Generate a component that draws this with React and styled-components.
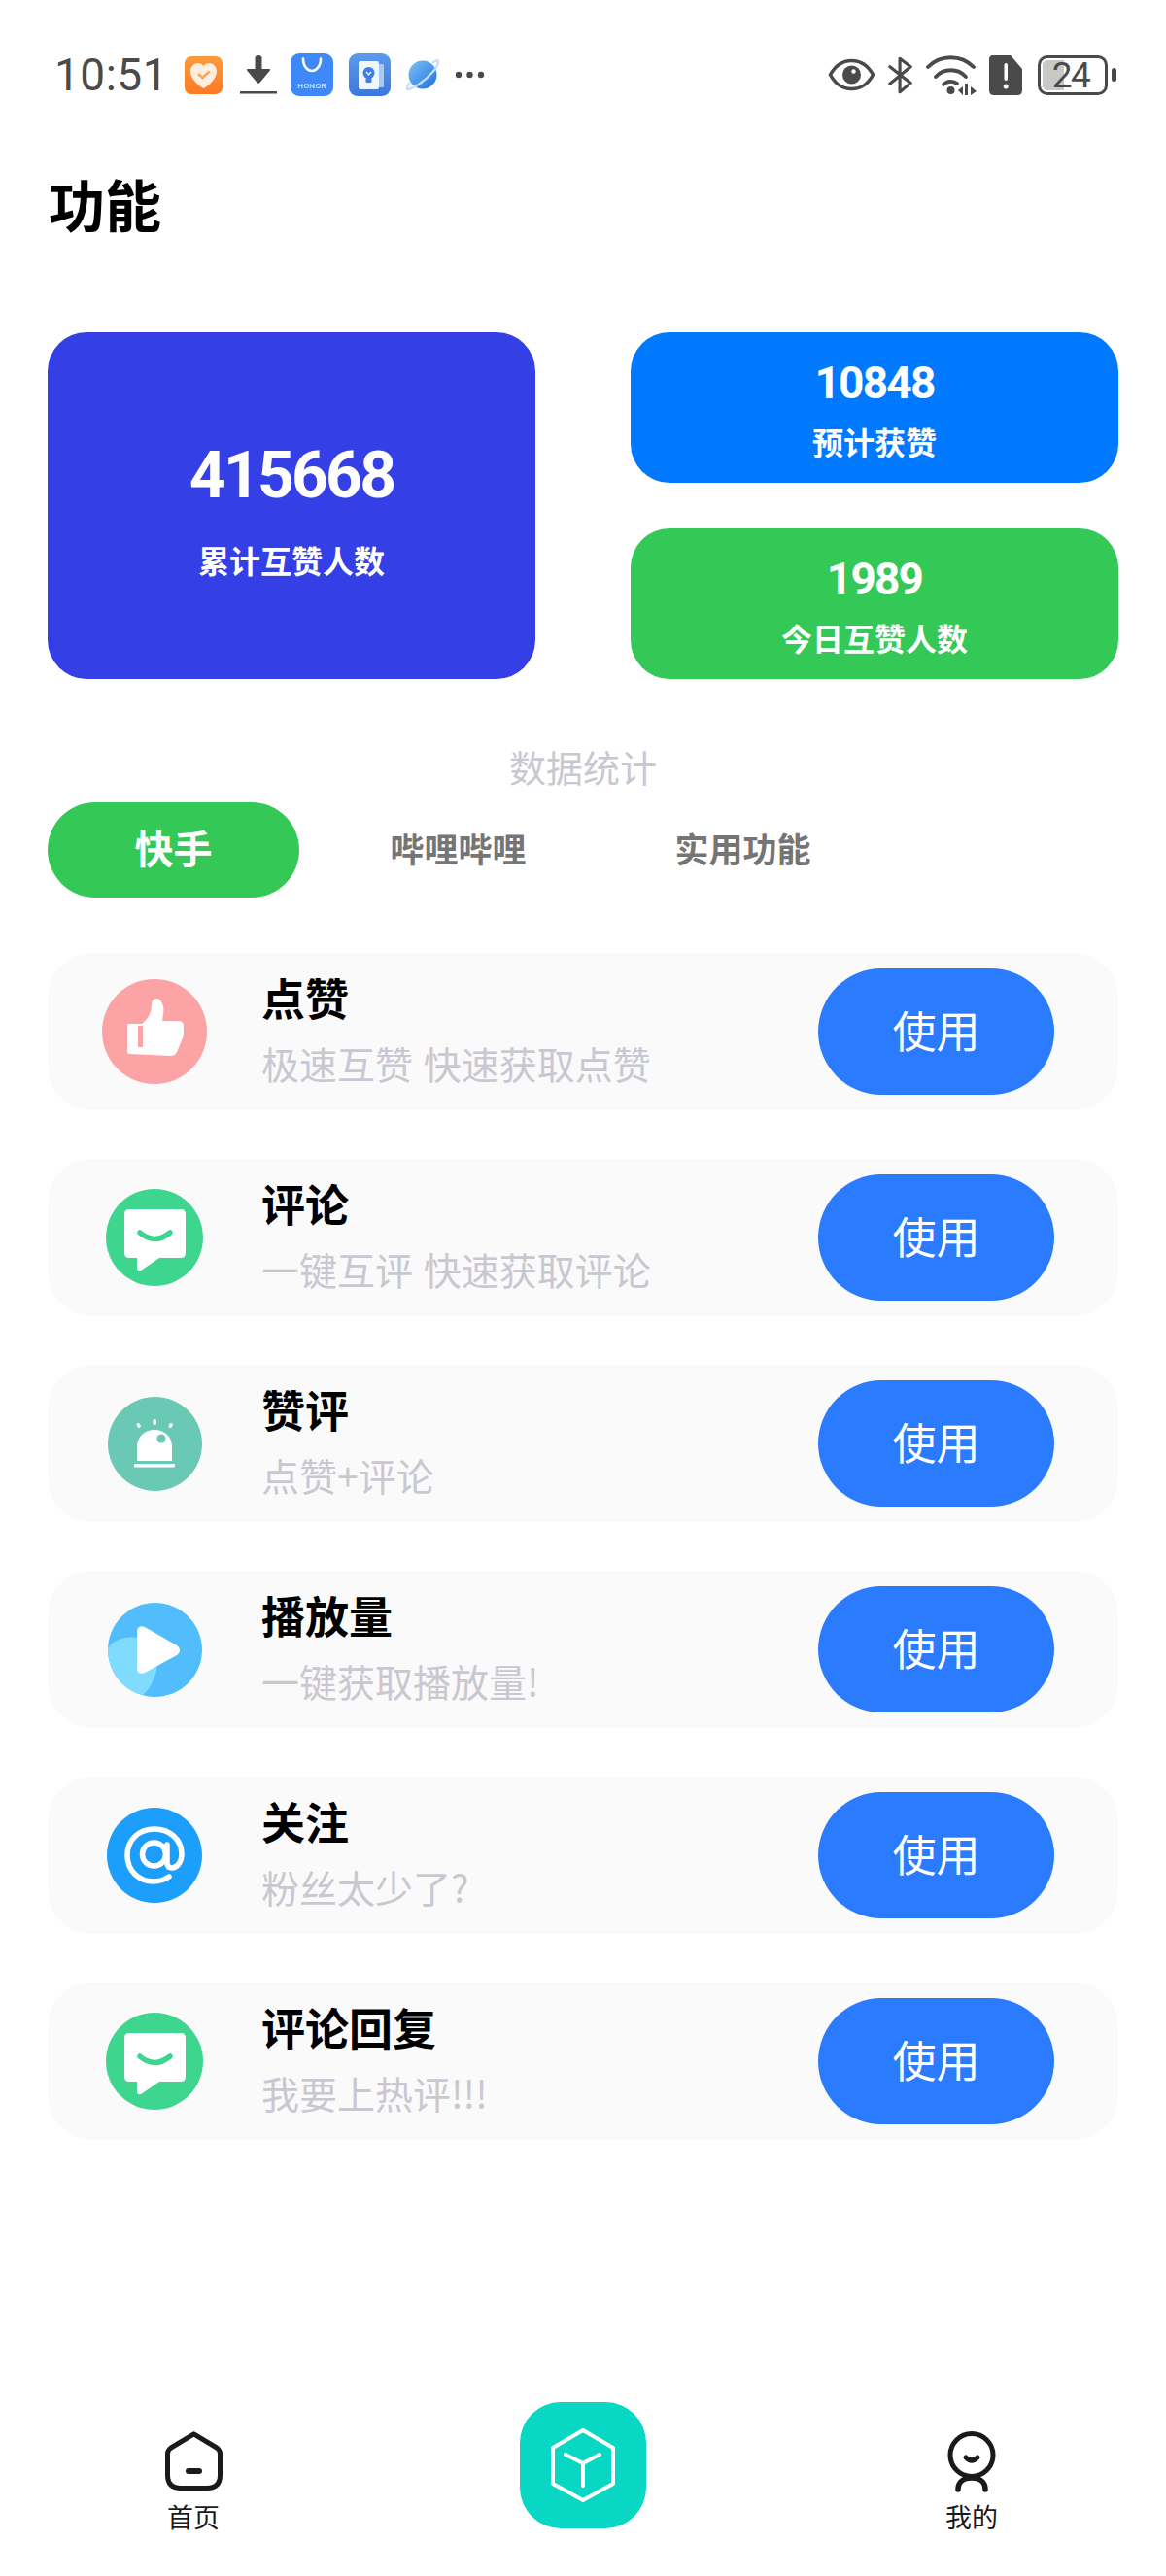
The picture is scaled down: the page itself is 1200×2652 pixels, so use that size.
import styled, { createGlobalStyle } from 'styled-components';

const GlobalStyle = createGlobalStyle`
    html, body {
        margin: 0;
        padding: 0;
        background: #fff;
        font-family: Roboto, "Noto Sans CJK SC", sans-serif;
    }
`

const features = [
    { id: 1, title: '点赞', desc: '极速互赞 快速获取点赞', icon: 'thumb' },
    { id: 2, title: '评论', desc: '一键互评 快速获取评论', icon: 'comment' },
    { id: 3, title: '赞评', desc: '点赞+评论', icon: 'siren' },
    { id: 4, title: '播放量', desc: '一键获取播放量!', icon: 'play' },
    { id: 5, title: '关注', desc: '粉丝太少了?', icon: 'at' },
    { id: 6, title: '评论回复', desc: '我要上热评!!!', icon: 'comment' },
];

const ThumbIcon = () => (
    <svg width="108" height="108" viewBox="0 0 108 108">
        <circle cx="54" cy="54" r="54" fill="#fca4a5" />
        <path fill="#fff" d="M27 46 H41 C47 42 51 34 51 26 C51 20 57 18 60 22 C63 26 64 30 63 36 L62 43 H79 Q84 43 84 48 V58 L77 75 Q75 79 71 79 L28 77 Q26 77 26 75 V48 Q26 46 27 46 Z" />
        <rect x="37" y="48" width="5" height="22" rx="1" fill="#fca4a5" />
    </svg>
);

const CommentIcon = () => (
    <svg width="100" height="100" viewBox="0 0 100 100">
        <circle cx="50" cy="50" r="50" fill="#3ed58f" />
        <path fill="#fff" d="M24 21 H77 Q82 21 82 26 V66 Q82 71 77 71 H55 L36 84 Q32 85 32 81 V71 H24 Q19 71 19 66 V26 Q19 21 24 21 Z" />
        <path fill="none" stroke="#3ed58f" strokeWidth="5.5" strokeLinecap="round" d="M35 45 Q50 58 66 45" />
    </svg>
);

const SirenIcon = () => (
    <svg width="97" height="97" viewBox="0 0 97 97">
        <circle cx="48.5" cy="48.5" r="48.5" fill="#69c9b5" />
        <path fill="#fff" d="M30 66 V51 C30 41 38 34 48 34 C58 34 66 41 66 51 V66 Z" />
        <circle cx="55" cy="43" r="4.5" fill="#69c9b5" />
        <rect x="27" y="69" width="42" height="3.5" rx="1" fill="#fff" />
        <rect x="30" y="27" width="3.5" height="5" rx="1.7" fill="#fff" transform="rotate(-30 31.7 29.5)" />
        <rect x="46.5" y="23" width="3.5" height="6" rx="1.7" fill="#fff" />
        <rect x="63" y="27" width="3.5" height="5" rx="1.7" fill="#fff" transform="rotate(30 64.7 29.5)" />
    </svg>
);

const PlayIcon = () => (
    <svg width="97" height="97" viewBox="0 0 97 97">
        <circle cx="48.5" cy="48.5" r="48.5" fill="#52bdfd" />
        <path fill="#80dcff" d="M0 47 C6 38 18 34 30 36 C42 38 52 48 51 63 C50 76 44 88 36 95 C15 90 0 71 0 47 Z" />
        <path fill="#fff" d="M30 30 C30 25 34 23 38 25 L71 44 C75 47 75 51 71 54 L38 72 C34 74 30 72 30 68 Z" />
    </svg>
);

const AtIcon = () => (
    <svg width="98" height="98" viewBox="0 0 98 98">
        <circle cx="49" cy="49" r="49" fill="#1b9efc" />
        <g fill="none" stroke="#fff" strokeWidth="5.5" strokeLinecap="round">
            <path d="M64 71 C58 75 53 76 48 76 C33 76 21 65 21 49 C21 33 33 22 49 22 C65 22 77 33 77 48 C77 56 72 62 67 62 C63 62 62 59 62 56 V38" />
            <circle cx="48.5" cy="48" r="12" />
        </g>
    </svg>
);

const featureIcons = {
    thumb: ThumbIcon,
    comment: CommentIcon,
    siren: SirenIcon,
    play: PlayIcon,
    at: AtIcon,
};

const StatusIcons = () => (
    <StatusLeft>
        <Time>10:51</Time>
        <svg width="39" height="39" viewBox="0 0 39 39">
            <defs>
                <linearGradient id="orangeApp" x1="0" y1="0" x2="0" y2="1">
                    <stop offset="0" stopColor="#fc9a3c" />
                    <stop offset="1" stopColor="#fb7a26" />
                </linearGradient>
            </defs>
            <rect width="39" height="39" rx="7" fill="url(#orangeApp)" />
            <path fill="#fdeee0" d="M19.5 33 C13 29 6 23 6 15.5 C6 10 10 7 14 7 C16.5 7 18.5 8.5 19.5 10 C20.5 8.5 22.5 7 25 7 C29 7 33 10 33 15.5 C33 23 26 29 19.5 33 Z" />
            <path fill="none" stroke="#f3a95b" strokeWidth="2.6" d="M14 18 L18.5 22 L25.5 15.5" />
        </svg>
        <DownloadSlot>
            <svg width="38" height="40" viewBox="0 0 38 40">
                <path fill="#4a4a4a" d="M15.5 2.5 Q15.5 0 19 0 Q22.5 0 22.5 2.5 V14 H30 Q32 14 30.5 16 L20.5 28 Q19 29.5 17.5 28 L7.5 16 Q6 14 8 14 H15.5 Z" />
                <rect y="37" width="38" height="2.5" fill="#4a4a4a" />
            </svg>
        </DownloadSlot>
        <HonorApp>
            <svg width="24" height="16" viewBox="0 0 24 16">
                <path fill="none" stroke="#fff" strokeWidth="2.6" strokeLinecap="round" d="M3 1.5 C3 10 8 14 12 14 C16 14 21 10 21 1.5" />
            </svg>
            <HonorText>HONOR</HonorText>
        </HonorApp>
        <svg width="43" height="44" viewBox="0 0 43 44">
            <defs>
                <linearGradient id="bookApp" x1="0" y1="0" x2="0" y2="1">
                    <stop offset="0" stopColor="#5a9bec" />
                    <stop offset="1" stopColor="#3b78de" />
                </linearGradient>
            </defs>
            <rect width="43" height="44" rx="9" fill="url(#bookApp)" />
            <rect x="31" y="11" width="5" height="24" rx="1" fill="#a9c9f3" />
            <rect x="10" y="8" width="21" height="29" rx="2" fill="#f1f5fc" />
            <circle cx="20.5" cy="20" r="6" fill="#3f7fe0" />
            <rect x="17.5" y="25" width="6" height="5" rx="1" fill="#3f7fe0" />
            <path fill="none" stroke="#f1f5fc" strokeWidth="1.3" d="M18 19 L20.5 22 L23 19" />
        </svg>
        <svg width="34" height="33" viewBox="0 0 34 33">
            <defs>
                <linearGradient id="planetApp" x1="0" y1="0" x2="1" y2="1">
                    <stop offset="0" stopColor="#7cc4f6" />
                    <stop offset="1" stopColor="#1f6fe0" />
                </linearGradient>
            </defs>
            <circle cx="17" cy="16" r="14.5" fill="url(#planetApp)" />
            <path fill="none" stroke="#c6dcfb" strokeWidth="2.4" d="M27 4 Q33 -1 33 3 C33 8 24 18 14 25 C6 30 0 33 1 29 Q1 27 4 24" />
        </svg>
        <svg width="31" height="8" viewBox="0 0 31 8">
            <circle cx="4" cy="4" r="3.2" fill="#4a4a4a" />
            <circle cx="15.5" cy="4" r="3.2" fill="#4a4a4a" />
            <circle cx="27" cy="4" r="3.2" fill="#4a4a4a" />
        </svg>
    </StatusLeft>
);

const StatusSystem = () => (
    <StatusRight>
        <svg width="49" height="34" viewBox="0 0 49 34">
            <path fill="none" stroke="#4a4a4a" strokeWidth="3.6" d="M2.5 17 C8 7 15 2.5 24.5 2.5 C34 2.5 41 7 46.5 17 C41 27 34 31.5 24.5 31.5 C15 31.5 8 27 2.5 17 Z" />
            <circle cx="24.5" cy="17" r="9.5" fill="#4a4a4a" />
            <circle cx="26.5" cy="13.5" r="2.2" fill="#fff" />
        </svg>
        <svg width="26" height="41" viewBox="0 0 28 41">
            <path fill="none" stroke="#4a4a4a" strokeWidth="3.4" strokeLinecap="round" strokeLinejoin="round" d="M2 11 L25 29 L13 39 V2 L25 11 L2 30" />
        </svg>
        <svg width="52" height="41" viewBox="0 0 52 41">
            <g fill="none" stroke="#4a4a4a" strokeWidth="3.8" strokeLinecap="round">
                <path d="M2 12 C15 -1 36 -1 49 12" />
                <path d="M10 22 C18 13 33 13 41 22" />
                <path d="M18 30 C22 26 28 26 32 29" />
            </g>
            <circle cx="25.5" cy="36" r="4" fill="#4a4a4a" />
            <path fill="#4a4a4a" d="M33 36 L38 32 V41 H38 Z M40 29 H43 V41 H40 Z M46 32 L52 37 L46 41 Z" />
        </svg>
        <svg width="34" height="41" viewBox="0 0 34 41">
            <path fill="#4a4a4a" d="M4 0 H22 L34 14 V36 Q34 41 29 41 H5 Q0 41 0 36 V4 Q0 0 4 0 Z" />
            <rect x="15.5" y="8" width="3.5" height="18" rx="1.7" fill="#fff" />
            <circle cx="17.2" cy="32" r="2.5" fill="#fff" />
        </svg>
        <Battery>
            <BatteryFill />
            <BatteryText>24</BatteryText>
            <BatteryNub />
        </Battery>
    </StatusRight>
);

const HomeIcon = () => (
    <svg width="59" height="61" viewBox="0 0 59 61">
        <path fill="none" stroke="#1a1a1a" strokeWidth="5" strokeLinejoin="round" d="M29.5 2.8 L53 17 Q56.5 19.5 56.5 23 V45 Q56.5 58.5 43 58.5 H16 Q2.5 58.5 2.5 45 V23 Q2.5 19.5 6 17 Z" />
        <rect x="21" y="38" width="17" height="6" rx="3" fill="#1a1a1a" />
    </svg>
);

const MineIcon = () => (
    <svg width="50" height="63" viewBox="0 0 50 63">
        <circle cx="25" cy="24.5" r="22" fill="none" stroke="#1a1a1a" strokeWidth="5" />
        <path fill="none" stroke="#1a1a1a" strokeWidth="5" strokeLinecap="round" d="M19 27 Q25 33 31 27" />
        <path fill="none" stroke="#1a1a1a" strokeWidth="5.5" strokeLinecap="round" d="M11 60 C11 52 17 48 25 48 C33 48 39 52 39 60" />
    </svg>
);

const CubeIcon = () => (
    <svg width="66" height="76" viewBox="0 0 66 76">
        <g fill="none" stroke="#fff" strokeWidth="4" strokeLinejoin="round" strokeLinecap="round">
            <path d="M33 2 L64 20 V57 L33 74 L2 57 V20 Z" />
            <path d="M15 27 L33 36 L50 27 M33 36 V59" />
        </g>
    </svg>
);

const App = () => {
    return (
        <Page>
            <GlobalStyle />
            <StatusBar>
                <StatusIcons />
                <StatusSystem />
            </StatusBar>

            <Heading>功能</Heading>

            <StatsGrid>
                <BigCard>
                    <BigNumber>415668</BigNumber>
                    <BigLabel>累计互赞人数</BigLabel>
                </BigCard>
                <SideCards>
                    <SmallCard $color="#0079ff">
                        <SmallNumber>10848</SmallNumber>
                        <SmallLabel>预计获赞</SmallLabel>
                    </SmallCard>
                    <SmallCard $color="#34c856">
                        <SmallNumber>1989</SmallNumber>
                        <SmallLabel>今日互赞人数</SmallLabel>
                    </SmallCard>
                </SideCards>
            </StatsGrid>

            <SectionTitle>数据统计</SectionTitle>

            <Tabs>
                <Tab $active>快手</Tab>
                <Tab>哔哩哔哩</Tab>
                <Tab>实用功能</Tab>
            </Tabs>

            <FeatureList>
                {features.map(item => {
                    const Icon = featureIcons[item.icon];
                    return (
                        <FeatureRow key={item.id}>
                            <IconSlot><Icon /></IconSlot>
                            <FeatureText>
                                <FeatureTitle>{item.title}</FeatureTitle>
                                <FeatureDesc>{item.desc}</FeatureDesc>
                            </FeatureText>
                            <UseButton>使用</UseButton>
                        </FeatureRow>
                    )
                })}
            </FeatureList>

            <BottomNav>
                <NavItem>
                    <NavIcon><HomeIcon /></NavIcon>
                    <NavLabel>首页</NavLabel>
                </NavItem>
                <CenterButton><CubeIcon /></CenterButton>
                <NavItem>
                    <NavIcon><MineIcon /></NavIcon>
                    <NavLabel>我的</NavLabel>
                </NavItem>
            </BottomNav>
        </Page>
    )
}

const Page = styled.div`
    width: 1200px;
    height: 2652px;
    box-sizing: border-box;
    display: flex;
    flex-direction: column;
    background: #fff;
    overflow: hidden;
`

const StatusBar = styled.div`
    height: 44px;
    margin-top: 55px;
    padding: 0 60px 0 56px;
    display: flex;
    justify-content: space-between;
    align-items: center;
`

const StatusLeft = styled.div`
    display: flex;
    align-items: center;
    gap: 16px;
`

const Time = styled.span`
    width: 118px;
    font-size: 46px;
    line-height: 44px;
    color: #4a4a4a;
    letter-spacing: 0.5px;
`

const DownloadSlot = styled.span`
    display: flex;
    margin: 0 0 0 2px;
`

const HonorApp = styled.div`
    width: 44px;
    height: 44px;
    margin-left: -2px;
    border-radius: 9px;
    background: #3f88f7;
    display: flex;
    flex-direction: column;
    align-items: center;
    justify-content: space-between;
    padding: 4px 0 6px;
    box-sizing: border-box;
`

const HonorText = styled.span`
    font-size: 8px;
    line-height: 9px;
    color: #e6f0ff;
    letter-spacing: 0.4px;
`

const StatusRight = styled.div`
    display: flex;
    align-items: center;
    gap: 13px;
`

const Battery = styled.div`
    position: relative;
    width: 72px;
    height: 41px;
    margin-left: 3px;
    box-sizing: border-box;
    border: 3.5px solid #4a4a4a;
    border-radius: 10px;
    display: flex;
    align-items: center;
    justify-content: center;
`

const BatteryFill = styled.span`
    position: absolute;
    left: 2px;
    top: 2px;
    bottom: 2px;
    width: 22px;
    background: #c8c8c8;
    border-radius: 5px 0 0 5px;
`

const BatteryText = styled.span`
    position: relative;
    left: -2px;
    font-size: 37px;
    line-height: 33px;
    color: #4a4a4a;
    letter-spacing: -1.6px;
`

const BatteryNub = styled.span`
    position: absolute;
    right: -12px;
    top: 10px;
    width: 5px;
    height: 14px;
    border-radius: 3px;
    background: #4a4a4a;
`

const Heading = styled.h1`
    margin: 70px 0 0 50px;
    height: 80px;
    font-size: 58px;
    line-height: 80px;
    font-weight: 700;
    color: #000;
    font-family: "Noto Sans CJK SC", sans-serif;
`

const StatsGrid = styled.div`
    margin: 93px 49px 0;
    display: grid;
    grid-template-columns: 502px 502px;
    justify-content: space-between;
    height: 357px;
`

const BigCard = styled.div`
    background: #3440e6;
    border-radius: 40px;
    color: #fff;
    text-align: center;
`

const BigNumber = styled.div`
    margin-top: 110px;
    font-size: 66px;
    line-height: 76px;
    font-weight: 700;
    letter-spacing: -2.8px;
`

const BigLabel = styled.div`
    margin-top: 26px;
    font-size: 32px;
    line-height: 44px;
    font-weight: 700;
    font-family: "Noto Sans CJK SC", sans-serif;
`

const SideCards = styled.div`
    display: flex;
    flex-direction: column;
    justify-content: space-between;
`

const SmallCard = styled.div`
    height: 155px;
    background: ${props => props.$color};
    border-radius: 40px;
    color: #fff;
    text-align: center;
    box-sizing: border-box;
    padding-top: 24px;
`

const SmallNumber = styled.div`
    font-size: 46px;
    line-height: 56px;
    font-weight: 700;
    letter-spacing: -1.8px;
`

const SmallLabel = styled.div`
    margin-top: 10px;
    font-size: 32px;
    line-height: 44px;
    font-weight: 700;
    font-family: "Noto Sans CJK SC", sans-serif;
`

const SectionTitle = styled.div`
    margin-top: 63px;
    text-align: center;
    font-size: 38px;
    line-height: 54px;
    color: #c9c8d1;
    font-family: "Noto Sans CJK SC", sans-serif;
`

const Tabs = styled.div`
    margin: 10px 49px 0;
    display: flex;
    gap: 34px;
`

const Tab = styled.div`
    width: 259px;
    height: 98px;
    box-sizing: border-box;
    padding-bottom: 6px;
    border-radius: 49px;
    display: flex;
    align-items: center;
    justify-content: center;
    font-family: "Noto Sans CJK SC", sans-serif;
    font-weight: 700;
    font-size: ${props => props.$active ? '40px' : '35px'};
    background: ${props => props.$active ? '#34c856' : 'transparent'};
    color: ${props => props.$active ? '#fff' : '#757575'};
`

const FeatureList = styled.div`
    margin: 57px 49px 0;
    display: flex;
    flex-direction: column;
    gap: 50px;
`

const FeatureRow = styled.div`
    height: 162px;
    background: #fafafa;
    border-radius: 46px;
    display: flex;
    align-items: center;
    padding: 0 66px 0 56px;
`

const IconSlot = styled.div`
    width: 108px;
    flex-shrink: 0;
    display: flex;
    justify-content: center;
    align-items: center;

    svg {
        display: block;
    }
`

const FeatureText = styled.div`
    flex: 1;
    margin-left: 56px;
    align-self: flex-start;
    padding-top: 16px;
    font-family: "Noto Sans CJK SC", sans-serif;
`

const FeatureTitle = styled.div`
    font-size: 45px;
    line-height: 60px;
    font-weight: 700;
    color: #000;
`

const FeatureDesc = styled.div`
    margin-top: 12px;
    font-size: 39px;
    line-height: 50px;
    color: #c9c8d1;
    word-spacing: 2px;
`

const UseButton = styled.div`
    width: 243px;
    height: 130px;
    flex-shrink: 0;
    box-sizing: border-box;
    padding-bottom: 5px;
    border-radius: 65px;
    background: #2b7bff;
    color: #fff;
    display: flex;
    align-items: center;
    justify-content: center;
    font-size: 45px;
    font-family: "Noto Sans CJK SC", sans-serif;
`

const BottomNav = styled.div`
    margin-top: auto;
    padding: 0 172px 46px 171px;
    display: flex;
    justify-content: space-between;
    align-items: flex-end;
`

const NavItem = styled.div`
    width: 56px;
    display: flex;
    flex-direction: column;
    align-items: center;
`

const NavIcon = styled.div`
    height: 63px;
    display: flex;
    align-items: flex-start;

    svg {
        display: block;
    }
`

const NavLabel = styled.div`
    margin-top: 10px;
    font-size: 27px;
    line-height: 30px;
    color: #1a1a1a;
    white-space: nowrap;
    font-family: "Noto Sans CJK SC", sans-serif;
`

const CenterButton = styled.div`
    width: 130px;
    height: 130px;
    margin-bottom: 3px;
    border-radius: 42px;
    background: #08d7c3;
    display: flex;
    align-items: center;
    justify-content: center;
`

export default App;
